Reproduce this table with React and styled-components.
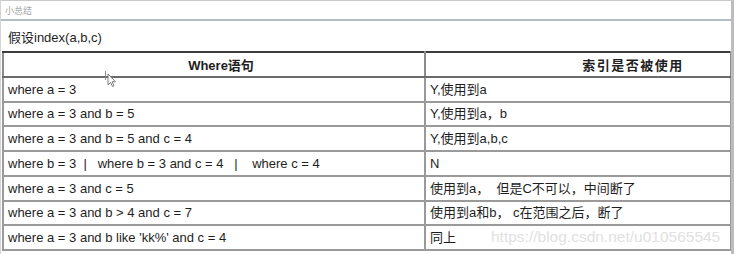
import styled, { createGlobalStyle } from "styled-components";

const GlobalStyle = createGlobalStyle`
  html, body {
    margin: 0;
    padding: 0;
    background: #ffffff;
  }
  body {
    font-family: "Liberation Sans", "Noto Sans CJK SC", sans-serif;
  }
`;

/* ================= FRAME ================= */

const Frame = styled.div`
  position: relative;
  width: 734px;
  height: 254px;
  box-sizing: border-box;
  border-top: 1px solid #c9c9c9;
  border-left: 1px solid #d4d4d4;
  border-right: 3px solid #bcbcbc;
  overflow: hidden;
`;

const TitleBar = styled.div`
  height: 18px;
  display: flex;
  align-items: center;
  padding-left: 4px;
  border-bottom: 2px solid #b3bdc5;
  font-size: 9px;
  color: #a8a8a8;
`;

const Body = styled.div`
  padding-left: 1px;
`;

const Caption = styled.div`
  height: 30px;
  display: flex;
  align-items: center;
  padding-left: 6px;
  font-size: 13px;
  color: #1e1e1e;
`;

/* ================= TABLE ================= */

const Table = styled.table`
  width: 730px;
  border-collapse: collapse;
  table-layout: fixed;
  font-size: 13px;
  color: #1e1e1e;
`;

const HeadCell = styled.th`
  height: 22.75px;
  padding: 0 0 0 ${(p) => p.$shift}px;
  border: 2px solid #8c8c8c;
  border-top-color: #3c3c3c;
  border-bottom-color: #6a6a6a;
  text-align: center;
  font-weight: bold;
  letter-spacing: ${(p) => p.$spacing || 0}px;
`;

const Cell = styled.td`
  height: 22.75px;
  padding: 0 0 0 4px;
  border: 2px solid #9a9a9a;
  border-left-color: ${(p) => (p.$side ? "#cfcfcf" : "#9a9a9a")};
  white-space: pre;
  line-height: 1;
`;

const Watermark = styled.div`
  position: absolute;
  left: 490px;
  top: 227px;
  font-size: 15.5px;
  color: #e1e1e1;
  white-space: nowrap;
  pointer-events: none;
`;

const Cursor = styled.svg`
  position: absolute;
  left: 103px;
  top: 70px;
`;

const rows = [
  ["where a = 3", "Y,使用到a"],
  ["where a = 3 and b = 5", "Y,使用到a，b"],
  ["where a = 3 and b = 5 and c = 4", "Y,使用到a,b,c"],
  ["where b = 3  |   where b = 3 and c = 4   |    where c = 4", "N"],
  ["where a = 3 and c = 5", "使用到a，  但是C不可以，中间断了"],
  ["where a = 3 and b > 4 and c = 7", "使用到a和b， c在范围之后，断了"],
  ["where a = 3 and b like 'kk%' and c = 4", "同上"],
];

export default function App() {
  return (
    <>
      <GlobalStyle />
      <Frame>
        <TitleBar>小总结</TitleBar>
        <Body>
          <Caption>假设index(a,b,c)</Caption>
          <Table>
            <colgroup>
              <col style={{ width: "422px" }} />
              <col />
            </colgroup>
            <thead>
              <tr>
                <HeadCell $shift={14}>Where语句</HeadCell>
                <HeadCell $shift={110} $spacing={1.5}>
                  索引是否被使用
                </HeadCell>
              </tr>
            </thead>
            <tbody>
              {rows.map(([cond, used]) => (
                <tr key={cond}>
                  <Cell>{cond}</Cell>
                  <Cell $side>{used}</Cell>
                </tr>
              ))}
            </tbody>
          </Table>
        </Body>
        <Watermark>https://blog.csdn.net/u010565545</Watermark>
        <Cursor width="14" height="16" viewBox="0 0 14 16">
          <line x1="1.5" y1="0" x2="1.5" y2="9" stroke="#8a8a8a" strokeWidth="1" />
          <path
            d="M4 3 L4 14 L6.5 11.5 L8.5 15.5 L10 14.8 L8 10.8 L11.5 10.8 Z"
            fill="#ffffff"
            stroke="#6e6e6e"
            strokeWidth="0.9"
            strokeLinejoin="round"
          />
        </Cursor>
      </Frame>
    </>
  );
}
